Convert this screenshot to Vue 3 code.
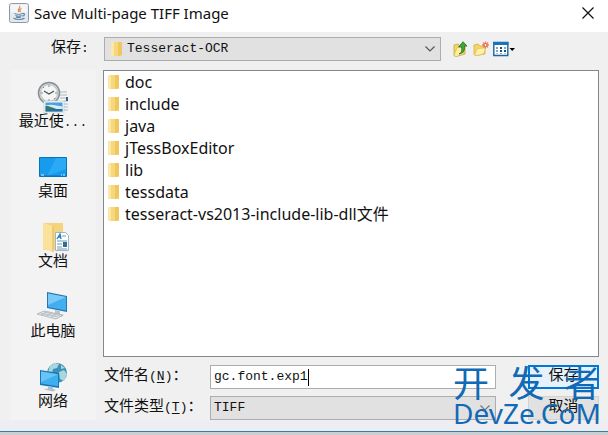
<script setup>
import { ref } from 'vue'

const folders = ['doc', 'include', 'java', 'jTessBoxEditor', 'lib', 'tessdata', 'tesseract-vs2013-include-lib-dll文件']
const places = [
  { id: 'recent', label: '最近使', more: '...' },
  { id: 'desktop', label: '桌面' },
  { id: 'documents', label: '文档' },
  { id: 'computer', label: '此电脑' },
  { id: 'network', label: '网络' }
]
const directory = ref('Tesseract-OCR')
const fileName = ref('gc.font.exp1')
const fileType = ref('TIFF')
</script>

<template>
  <div class="dialog">
    <header class="titlebar">
      <svg class="java" viewBox="0 0 20 20">
        <rect x=".5" y=".5" width="19" height="19" rx="2" fill="#e3e9ef" stroke="#8c9aa8" />
        <rect x="1.5" y="1.5" width="17" height="8" fill="#f4f6f8" />
        <path d="M10.500 3c2 2-3 3-.5 6M12.500 5.500c-2 1-2 2-1 3.500" fill="none" stroke="#e38b57" stroke-width="1.300" />
        <path d="M5.500 10.500c2 1 6 1 8 0M6.500 12.500c2 1 4 1 6 0M7 14c2 .8 3 .8 5 0M4.500 15c2 2 9 2 11 0M13.500 10.500c3-.5 2.500 2.500-.5 2.500" fill="none" stroke="#5f87a8" stroke-width="1.200" />
      </svg>
      <h1>Save Multi-page TIFF Image</h1>
      <button class="close" aria-label="Close">
        <svg viewBox="0 0 12 12"><path d="M.5.500l11 11M11.500.500l-11 11" stroke="#111" stroke-width="1.200" /></svg>
      </button>
    </header>

    <div class="toolbar">
      <label class="dir-label" for="dir">保存<span class="latin">:</span></label>
      <div class="combo dir-combo">
        <svg class="folder" viewBox="0 0 12 16"><path d="M0 1h8l3 2v12H0z" fill="#f6d77c" /><path d="M0 1h3v14H0z" fill="#fae7a9" /><path d="M7 1l4 0v13l-4 1z" fill="#efc75e" /></svg>
        <select id="dir" v-model="directory"><option>Tesseract-OCR</option></select>
        <svg class="chevron" viewBox="0 0 10 6"><path d="M.5.500l4.500 4.500L9.500.500" fill="none" stroke="#555" stroke-width="1.200" /></svg>
      </div>
      <div class="tools">
        <button aria-label="Up one level">
          <svg width="16" height="16" viewBox="0 0 16 16">
            <path d="M1 4l4-1 2 2 5-1v9l-9 2.500-2-1z" fill="#f3d568" stroke="#c9a63b" stroke-width=".8" />
            <path d="M1 14.500l3-8 8-1.500-2 8.500-7 2z" fill="#fff0a0" stroke="#d2b248" stroke-width=".6" />
            <path d="M6 13c3-1 3-4 2.500-7H5.500L10 .700l4 4.300h-2.500c.5 4-1 7.500-5.500 8z" fill="#43a439" stroke="#267027" stroke-width=".8" />
          </svg>
        </button>
        <button aria-label="New folder">
          <svg width="16" height="16" viewBox="0 0 16 16">
            <path d="M1 4l4-1 2 2h5v8l-9 1.500-2-1z" fill="#f3d568" stroke="#d4ae48" stroke-width=".8" />
            <path d="M1.500 14l3-6.500 8-.5-2 6-7 1.500z" fill="#fff0a8" stroke="#d7b851" stroke-width=".6" />
            <path d="M12.500.500v7M9 4h7M10 1.500l5 5M15 1.500l-5 5" stroke="#ef8b60" stroke-width="1.300" />
            <circle cx="12.500" cy="4" r="1.600" fill="#fff" stroke="#d95339" />
          </svg>
        </button>
        <button class="views" aria-label="View menu">
          <svg width="22" height="16" viewBox="0 0 22 16">
            <path d="M.8 1.500h14v13h-14z" fill="#fff" stroke="#1766a8" stroke-width="1.400" />
            <path d="M0 1h15.500v3H0z" fill="#1873ba" />
            <g fill="#93a1ad"><path d="M3 6h2v2H3zM3 9h2v2H3zM11 6h2v2h-2zM7 12h2v1H7z" /></g>
            <g fill="#174f85"><path d="M7 6h2v2H7zM7 9h2v2H7zM11 9h2v2h-2z" /></g>
            <path d="M3 12h2v1H3zM11 12h2v1h-2z" fill="#c4c9cf" />
            <path d="M16.500 7H22l-2.750 3z" fill="#000" />
          </svg>
        </button>
      </div>
    </div>

    <div class="body">
      <nav class="places">
        <button v-for="p in places" :key="p.id" class="place">
          <svg v-if="p.id === 'recent'" viewBox="0 0 32 32">
            <path d="M18 10h13v21H18z" fill="#f4f6f7" /><path d="M23 11h7M23 14h7M23 17h7M27 20h4M27 23h4M27 26h4M27 29h4" stroke="#a9b6bf" /><path d="M29 16h2v4h-2z" fill="#345f95" />
            <circle cx="12" cy="12" r="10.500" fill="#d9dcdb" stroke="#888f92" stroke-width="1.500" /><circle cx="12" cy="12" r="8.500" fill="#f4f6f5" stroke="#b8bdbd" />
            <path d="M12 4v2M12 18v2M4 12h2M18 12h2M6 6l1 1M18 18l-1-1" stroke="#888" /><path d="M7 10l5 3 5-3" fill="none" stroke="#4b5357" stroke-width="1.300" />
            <path d="M7 20h20v12H7z" fill="#f5f8fa" stroke="#b9c4ca" stroke-width=".6" /><path d="M8.500 21.500h17v9h-17z" fill="#4a9fe0" /><path d="M8.500 24.500c6-2 11 0 17 1v3h-17z" fill="#d5ebf5" /><path d="M8.500 25c5 0 7 2 11 3h-11z" fill="#3c7a5c" /><path d="M8.500 28h17v2.500h-17z" fill="#286f9c" />
          </svg>
          <svg v-else-if="p.id === 'desktop'" viewBox="0 0 32 32">
            <path d="M2.500 6.500h27v19h-27z" fill="#169cef" stroke="#0874b8" /><path d="M19 7h10v11L10 25z" fill="#2aa9f5" /><path d="M3 24h26v1H3z" fill="#1685ce" /><path d="M4 24h3M24 24h1M26 24h2" stroke="#d9f2ff" />
          </svg>
          <svg v-else-if="p.id === 'documents'" viewBox="0 0 32 32">
            <path d="M6 2h20v27H6z" fill="#f4d57d" /><path d="M6 2l10 3v26L6 28z" fill="#fae29a" /><path d="M16 5v26" stroke="#dfb95d" />
            <path d="M18.500 11.500h10l3 3v15h-13z" fill="#fff" stroke="#a8b4bb" /><path d="M20 18l3-5 1 5M21 16h3" fill="none" stroke="#1784c5" stroke-width="1.300" /><path d="M25 15h4M20 20h10M20 23h5M20 26h5M20 28h10" stroke="#679bb8" /><path d="M26 21h4v5h-4z" fill="#326e90" />
          </svg>
          <svg v-else-if="p.id === 'computer'" viewBox="0 0 32 32">
            <path d="M10 1l20 4v16l-20-4z" fill="#2577ae" /><path d="M11 2.500l18 3.500v13.500L11 16z" fill="#41aff0" /><path d="M11 2.500l18 3.500L11 14z" fill="#79caf7" />
            <path d="M18 19l5 1v3l4 1-3 2-9-2 3-1z" fill="#bac5cb" /><path d="M0 23l7-3 19 4-7 4z" fill="#e2e6e8" stroke="#a8b0b5" stroke-width=".8" /><path d="M4 22.500l17 3.500M7 21l16 3.500M4 24l5-2.500M9 25l5-2.500M14 26l5-2.500" stroke="#a9b5bd" stroke-width=".7" />
          </svg>
          <svg v-else viewBox="0 0 32 32">
            <circle cx="20" cy="12" r="10" fill="#3d91b8" /><path d="M13 5l5-3 4 1-2 4-4 1-1 4-4-1zM22 11l5-2 3 4-3 7-4-2zM24 4l4 3-4 1z" fill="#a9d8dc" />
            <path d="M3 9l19 3v15L3 24z" fill="#1976b7" /><path d="M4 10.500l17 2.700v12L4 22.500z" fill="#3eaff1" /><path d="M4 10.500l17 2.700L4 21z" fill="#69c4f5" /><path d="M11 25l5 1v2l3 1-3 1.500-9-2 4-1z" fill="#a9c5d2" />
          </svg>
          <span>{{ p.label }}<span v-if="p.more" class="latin">{{ p.more }}</span></span>
        </button>
      </nav>

      <main class="content">
        <ul class="files">
          <li v-for="f in folders" :key="f">
            <svg class="folder" viewBox="0 0 12 16"><path d="M0 1h8l3 2v12H0z" fill="#f6d77c" /><path d="M0 1h3v14H0z" fill="#fae7a9" /><path d="M7 1l4 0v13l-4 1z" fill="#efc75e" /></svg>
            <span>{{ f }}</span>
          </li>
        </ul>
        <form class="form" @submit.prevent>
          <label for="filename">文件名<span class="latin">(<u>N</u>)</span>：</label>
          <div class="textbox">
            <input id="filename" v-model="fileName" :style="{ width: fileName.length + 'ch' }" />
            <i class="caret"></i>
          </div>
          <button class="action primary">保存</button>
          <label for="filetype">文件类型<span class="latin">(<u>T</u>)</span>：</label>
          <div class="combo">
            <select id="filetype" v-model="fileType"><option>TIFF</option></select>
            <svg class="chevron" viewBox="0 0 10 6"><path d="M.5.500l4.500 4.500L9.500.500" fill="none" stroke="#777" stroke-width="1.200" /></svg>
          </div>
          <button class="action" type="button">取消</button>
        </form>
      </main>
    </div>
    <footer class="edge"></footer>
    <div class="watermark">
      <div class="mark-top"><span>开</span><span>发</span><span>者</span></div>
      <div class="mark-site">DevZe.CoM</div>
    </div>
  </div>
</template>

<style>
body { margin: 0; background: #c9cfd3; }
</style>

<style scoped>
* { box-sizing: border-box; }
.dialog {
  position: relative;
  background: #f0f0f0;
  color: #111;
  font: 15px/20px "Liberation Mono", "Noto Sans CJK SC", monospace;
}
button, input, select { font: inherit; color: inherit; padding: 0; margin: 0; border: 0; background: none; }
svg { display: block; }
.latin { font-size: 13px; }
.titlebar { display: flex; align-items: center; height: 32px; padding: 0 14px 6px 9px; background: #fff; }
.java { width: 20px; height: 20px; }
h1 { flex: 1; margin: 0 0 0 5px; font: 15px/20px "Noto Sans", sans-serif; }
.close { width: 12px; height: 12px; }
.close svg { width: 12px; height: 12px; }
.toolbar { display: flex; align-items: center; height: 38px; padding: 0 9px 4px 51px; }
.dir-label { width: 53px; }
.combo { display: flex; align-items: center; height: 24px; padding: 0 5px 0 3px; border: 1px solid #adadad; background: #e1e1e1; }
.combo select { flex: 1; min-width: 0; height: 22px; appearance: none; font-size: 13px; outline: 0; }
.dir-combo { flex: 1; padding-left: 6px; gap: 4px; }
.chevron { width: 10px; height: 6px; }
.folder { width: 12px; height: 16px; flex: none; }
.tools { display: flex; gap: 4px; width: 158px; padding-left: 12px; }
.body { display: flex; padding: 0 9px 0 10px; }
.places { display: flex; flex-direction: column; gap: 18px; width: 86px; padding-top: 11px; background: #f3f3f3; }
.place { display: flex; flex-direction: column; align-items: center; }
.place svg { width: 32px; height: 32px; }
.place > span { line-height: 20px; }
.content { flex: 1; min-width: 0; padding-left: 7px; }
.files { height: 287px; margin: 0; padding: 0 0 0 4px; list-style: none; border: 1px solid #828790; background: #fff; font: 16px/22px "Noto Sans", "Noto Sans CJK SC", sans-serif; }
.files li { display: flex; align-items: center; gap: 5px; height: 22px; }
.form { display: grid; grid-template-columns: 107px 1fr 71px; row-gap: 7px; padding-top: 8px; align-items: center; }
.form label { white-space: nowrap; padding-left: 1px; }
.form label u { text-underline-offset: 2px; }
.textbox, .form .combo { margin-right: 32px; }
.textbox { display: flex; align-items: center; height: 24px; padding: 0 3px; border: 1px solid #adadad; background: #fff; font-size: 13px; }
.textbox input { height: 20px; outline: 0; }
.caret { width: 1px; height: 17px; background: #000; }
.action { height: 24px; border: 1px solid #d2d2d2; background: #e1e1e1; }
.primary { border: 2px solid #0078d7; background: #e5f1fb; }
.edge { height: 12px; border-bottom: 1px solid #397e9f; background: #eeeef2; }
.watermark { position: absolute; right: 8px; bottom: 3px; width: 147px; color: #1269b5; pointer-events: none; }
.mark-top { display: flex; justify-content: space-between; font: 36px/32px "Noto Sans CJK SC", sans-serif; }
.mark-site { font: 28px/32px "Noto Sans", sans-serif; }
</style>
